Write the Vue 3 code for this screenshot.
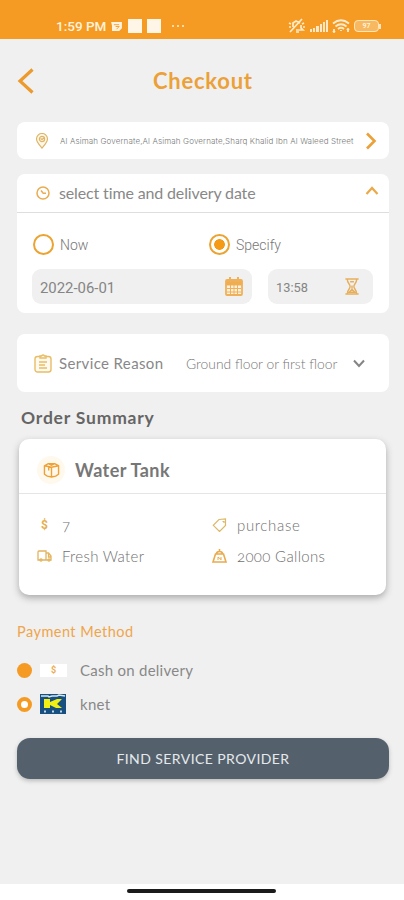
<script setup>
const address = 'Al Asimah Governate,Al Asimah Governate,Sharq Khalid Ibn Al Waleed Street'
const bars = [3, 4, 6, 8, 10, 12]
</script>

<template>
  <div class="screen">
    <header class="status">
      <span class="clock">1:59 PM</span>
      <svg class="msg" viewBox="0 0 12 10"><path d="M0 0h12v7l-3 3H1V4z" fill="#fff3df"/><path d="M3 3h6M5 5h4L6 8" stroke="#f59b23" fill="none"/></svg>
      <i class="square"></i><i class="square second"></i>
      <svg class="more" viewBox="0 0 14 4"><g fill="#fff0d6"><circle cx="2" cy="2" r="1"/><circle cx="7" cy="2" r="1"/><circle cx="12" cy="2" r="1"/></g></svg>
      <svg class="mute" viewBox="0 0 18 16" fill="none" stroke="#ffebc9" stroke-width="1.700"><path d="M5 9V5l3-2 4 2M13 7v3l2 2H8M2 14 14 1M8 14h3M1 5l2 1M1 9h2M16 5l-2 1M17 9h-2"/></svg>
      <span class="signal"><i v-for="h in bars" :key="h" :style="{ height: h + 'px' }"></i></span>
      <svg class="wifi" viewBox="0 0 18 14" fill="none" stroke="#ffecd0" stroke-width="1.8"><path d="M1 4.500q8-6.500 16 0M3.500 7.500q5.500-4.500 11 0M6 10q3-2.500 6 0"/><path d="M9 11v1M2 10v3M1 12l1 1 1-1M16 13v-3M15 11l1-1 1 1"/></svg>
      <span class="battery">97</span><i class="nub"></i>
    </header>

    <div class="titlebar">
      <svg class="back" viewBox="0 0 18 26" fill="none" stroke="#ec9a2b" stroke-width="3.200"><path d="M15.500 1.500 3 13l12.500 11.500"/></svg>
      <h1>Checkout</h1>
    </div>

    <main>
      <section class="card address">
        <svg class="pin" viewBox="0 0 14 16" fill="#fff8e8" stroke="#deb568" stroke-width="1.200"><path d="M7 15C4 11.500 1.500 9 1.500 6a5.500 5.500 0 0 1 11 0C12.500 9 10 11.500 7 15z"/><circle cx="7" cy="6" r="2.600"/><path d="m5.500 5.500 1.500 1L9 5"/></svg>
        <span class="address-text">{{ address }}</span>
        <svg class="next" viewBox="0 0 12 18" fill="none" stroke="#eba039" stroke-width="2.600"><path d="m2 1.500 7.500 7.500L2 16.500"/></svg>
      </section>

      <section class="card schedule">
        <div class="schedule-head">
          <svg class="time" viewBox="0 0 14 14" fill="none" stroke="#e9ac50" stroke-width="1.500"><circle cx="7" cy="7" r="6"/><path d="M5 4.500 7.200 7.200H10"/></svg>
          <span class="schedule-title">select time and delivery date</span>
          <svg class="up" viewBox="0 0 14 10" fill="none" stroke="#eba947" stroke-width="2.200"><path d="m1.500 8 5.500-6 5.500 6"/></svg>
        </div>
        <div class="choices">
          <div class="choice"><i class="radio"></i><span class="now">Now</span></div>
          <div class="choice"><i class="radio selected"></i><span class="specify">Specify</span></div>
        </div>
        <div class="fields">
          <div class="field date"><span>2022-06-01</span>
            <svg class="calendar" viewBox="0 0 18 19" fill="#fdf0dc" stroke="#eeb15a"><rect x="1" y="3" width="16" height="15" rx="1" stroke-width="1.800"/><path d="M1 4h16v4H1z" fill="#f0ac50"/><path d="M5 0v5M13 0v5" stroke-width="2"/><path d="M2 11.500h14M2 15h14M5.500 8v9M9 8v9M12.500 8v9"/></svg>
          </div>
          <div class="field hour"><span>13:58</span>
            <svg class="hourglass" viewBox="0 0 14 18" fill="none" stroke="#e7af5d" stroke-width="1.500"><path d="M0 1h14M0 17h14M2 1c0 5 3 5 3 8s-3 3-3 8M12 1c0 5-3 5-3 8s3 3 3 8M5 4h4M7 8v3M4 15l3-3 3 3z"/></svg>
          </div>
        </div>
      </section>

      <section class="card reason">
        <svg class="clipboard" viewBox="0 0 18 19" fill="#fffaf0" stroke="#e8bd66" stroke-width="1.400"><rect x="1" y="2.500" width="16" height="15.500" rx="2.500"/><path d="M6 4V2h1.500q1.500-2 3 0H12v2zM5 8h8M5 11h6M5 14h8"/></svg>
        <span class="reason-label">Service Reason</span>
        <span class="reason-value">Ground floor or first floor</span>
        <svg class="down" viewBox="0 0 12 9" fill="none" stroke="#858585" stroke-width="2"><path d="m1 1.500 5 5.500 5-5.500"/></svg>
      </section>

      <h2>Order Summary</h2>

      <section class="summary">
        <div class="summary-head">
          <span class="box-icon"><svg viewBox="0 0 18 17" fill="none" stroke="#efa036" stroke-width="1.500"><path d="m1.500 4 4-2.200h7L16.500 4v9l-3 2L9 16l-4.500-1-3-2zM1.500 4 9 5.500 16.500 4M9 5.500V16M5.500 1.800 9 3.500l3.500-1.700M6 5v4"/></svg></span>
          <h3>Water Tank</h3>
        </div>
        <div class="details">
          <div class="detail"><span class="icon dollar">$</span><span class="seven">7</span></div>
          <div class="detail"><svg class="icon tag" viewBox="0 0 14 14" fill="none" stroke="#dcb969" stroke-width="1.200"><path d="M6.500 1.500 13 1v6.500L7 13.500.8 7.300zM10 3.500h1.500V5"/></svg><span class="purchase">purchase</span></div>
          <div class="detail"><svg class="icon truck" viewBox="0 0 15 12" fill="none" stroke="#e2b45e" stroke-width="1.300"><path d="M3 10H1V2q0-1 1-1h7v9H5M9 3h2.500L14 6v4h-1M9 10h2M11.500 4v3H14"/><circle cx="4" cy="10" r="1"/><circle cx="12" cy="10" r="1"/></svg><span class="fresh">Fresh Water</span></div>
          <div class="detail"><svg class="icon weight" viewBox="0 0 15 14" fill="none" stroke="#e8ab4d" stroke-width="1.600"><path d="M3.500 5h8l2.500 8H1zM4.500 5q0-2.500 3-2.500t3 2.500M7.500 0v2.500"/><path d="M6 8l3 2.500M6 11V8M9 11V8" stroke-width="1"/></svg><span class="gallons">2000 Gallons</span></div>
        </div>
      </section>

      <h4>Payment Method</h4>
      <div class="pay">
        <i class="dot"></i><span class="cash">$</span><span class="cash-label">Cash on delivery</span>
      </div>
      <div class="pay knet-row">
        <i class="dot hollow"></i>
        <svg class="knet" viewBox="0 0 26 20"><path fill="#164f80" d="M0 0h26v20H0z"/><path d="M1 2h7l1 1 3-1h5l2-1 6 1" stroke="#d9e8ec" stroke-width="1.500" fill="none"/><path fill="#f1ee16" d="M4 5h6v3l7-3h5l-5 5 5 4h-6l-6-3v3H4z"/><path d="M4 17.500h2M12 17.500h2M20 17.500h2" stroke="#bfd8e3" stroke-width="2"/></svg>
        <span class="knet-label">knet</span>
      </div>
      <button><span>FIND SERVICE PROVIDER</span></button>
    </main>

    <footer><i></i></footer>
  </div>
</template>

<style>
body { background: #f0f0f0; }
</style>

<style scoped>
* { box-sizing: border-box; }
svg { display: block; flex: none; }
i { display: block; flex: none; }
span { white-space: nowrap; }
.screen { width: 404px; height: 900px; background: #f0f0f0; font-family: Lato, "Open Sans", sans-serif; color: #888; display: flex; flex-direction: column; overflow: hidden; }
.status { height: 39px; background: #f59b23; display: flex; align-items: center; padding: 13px 0 0 56px; flex: none; }
.clock { width: 51px; font: 500 13.500px/14px Roboto, sans-serif; color: #fff2dd; }
.msg { width: 11px; height: 9px; margin-left: 4px; }
.square { width: 14px; height: 14px; background: #fff6e8; margin-left: 6px; }
.square.second { margin-left: 5px; }
.more { width: 14px; height: 4px; margin-left: 10px; }
.mute { width: 18px; height: 16px; margin-left: 103px; }
.signal { display: flex; align-items: flex-end; gap: 1px; width: 19px; margin-left: 4px; height: 12px; }
.signal i { width: 2.200px; background: #ffe8c5; }
.wifi { width: 18px; height: 14px; margin-left: 3px; }
.battery { width: 25px; height: 12px; margin-left: 4px; border: 1.500px solid #ffe5b9; border-radius: 4px; background: #f8b85f; color: #fff2dc; font: 700 7px/10px Roboto, sans-serif; text-align: center; }
.nub { width: 2px; height: 5px; background: #ffe5b9; }
.titlebar { height: 83px; display: flex; align-items: center; padding-left: 17px; flex: none; }
.back { width: 18px; height: 26px; }
h1, h2, h3, h4 { margin: 0; white-space: nowrap; }
h1 { margin-left: 118px; color: #eca038; font: 700 22px/28px Lato, sans-serif; letter-spacing: .76px; }
main { padding: 0 15px 0 17px; height: 762px; display: flex; flex-direction: column; }
.card { background: #fff; border-radius: 8px; flex: none; }
.address { height: 37px; display: flex; align-items: center; padding-left: 18px; }
.pin { width: 14px; height: 16px; }
.address-text { width: 302px; margin-left: 11px; font: 300 8px/12px Inter, sans-serif; color: #777; letter-spacing: .13px; }
.next { width: 12px; height: 18px; margin-left: 3px; }
.schedule { height: 139px; margin-top: 15px; }
.schedule-head { height: 39px; border-bottom: 1px solid #dedede; display: flex; align-items: center; padding-left: 19px; }
.time { width: 14px; height: 14px; }
.schedule-title { width: 298px; margin: -2px 0 0 9px; font-size: 16px; letter-spacing: -.14px; }
.up { width: 14px; height: 10px; margin-left: 8px; margin-top: -4px; }
.choices { height: 56px; display: grid; grid-template-columns: 176px 1fr; align-items: center; padding: 7px 0 0 16px; }
.choice { display: flex; align-items: center; gap: 6px; font: 300 14px/20px Roboto, sans-serif; color: #777; }
.radio { width: 21px; height: 21px; border: 2px solid #eba332; border-radius: 50%; }
.selected { background: radial-gradient(circle, #f49a17 0 5px, #fff 5.700px); }
.fields { display: flex; gap: 16px; padding-left: 15px; }
.field { height: 35px; background: #f0f0f0; border-radius: 9px; display: flex; align-items: center; justify-content: space-between; font-family: Roboto, sans-serif; color: #858585; }
.field span { margin-top: 2px; }
.date { width: 220px; padding: 0 9px 0 8px; font-size: 14.900px; }
.hour { width: 105px; padding: 0 14px 0 8px; font-size: 12.800px; }
.calendar { width: 18px; height: 19px; }
.hourglass { width: 14px; height: 17px; }
.reason { height: 58px; margin-top: 21px; display: flex; align-items: center; padding-left: 17px; }
.clipboard { width: 18px; height: 19px; }
.reason-label { width: 118px; margin-left: 7px; font-size: 15px; letter-spacing: .37px; }
.reason-value { width: 156px; margin-left: 9px; font-size: 13.850px; font-weight: 300; color: #777; }
.down { width: 12px; height: 9px; margin-left: 11px; }
h2 { height: 24px; margin: 14px 0 0 4px; font-size: 17.500px; line-height: 24px; letter-spacing: .8px; color: #656565; flex: none; }
.summary { width: 367px; height: 156px; margin: 9px 0 0 2px; border-radius: 10px; background: #fff; box-shadow: 0 3px 7px #aaa; flex: none; }
.summary-head { height: 55px; border-bottom: 1px solid #e5e5e5; display: flex; align-items: center; padding: 8px 0 0 18px; }
.box-icon { width: 28px; height: 28px; border-radius: 50%; background: #fff9ed; display: grid; place-items: center; }
.box-icon svg { width: 17px; height: 16px; }
h3 { margin-left: 10px; font-size: 18px; line-height: 24px; letter-spacing: .4px; color: #777; }
.details { display: grid; grid-template-columns: 175px 1fr; grid-template-rows: 31px 31px; padding: 15px 0 0 18px; }
.detail { display: flex; align-items: center; font-size: 15px; font-weight: 300; color: #6f6f6f; font-variant-numeric: oldstyle-nums; }
.icon { width: 15px; height: 14px; margin-right: 11px; }
.dollar { font: 700 12px/14px Roboto, sans-serif; color: #e5b052; text-align: center; }
.seven, .fresh { margin-left: -1px; }
.purchase, .gallons { margin-left: -1px; }
.purchase { letter-spacing: .65px; }
.fresh { letter-spacing: .32px; }
.gallons { letter-spacing: .33px; }
h4 { height: 20px; margin-top: 27px; font-size: 14.500px; line-height: 20px; font-weight: 400; letter-spacing: .47px; color: #efa54a; flex: none; }
.pay { height: 34px; margin-top: 11px; display: flex; align-items: center; flex: none; }
.knet-row { margin-top: 0; }
.dot { width: 15px; height: 15px; background: #f59b23; border-radius: 50%; }
.hollow { background: #fff; border: 4px solid #f59b23; }
.cash { width: 27px; height: 13px; margin-left: 8px; background: #fff; text-align: center; color: #ecac4e; font: 700 9px/13px Roboto, sans-serif; }
.cash-label, .knet-label { margin-left: 13px; font-size: 15px; letter-spacing: .26px; }
.knet { width: 26px; height: 20px; margin-left: 8px; }
.knet-label { margin-left: 14px; }
button { height: 41px; width: 372px; margin: 17px 0 0; border: 0; border-radius: 13px; background: #54616d; box-shadow: 0 2px 4px #bbb; color: #e6e9ec; font: 400 14px/20px Lato, sans-serif; letter-spacing: .42px; flex: none; padding: 0; }
footer { height: 16px; background: #fff; flex: none; padding: 5px 0 0 127px; }
footer i { width: 149px; height: 4px; border-radius: 2px; background: #1b1b1b; }
</style>
